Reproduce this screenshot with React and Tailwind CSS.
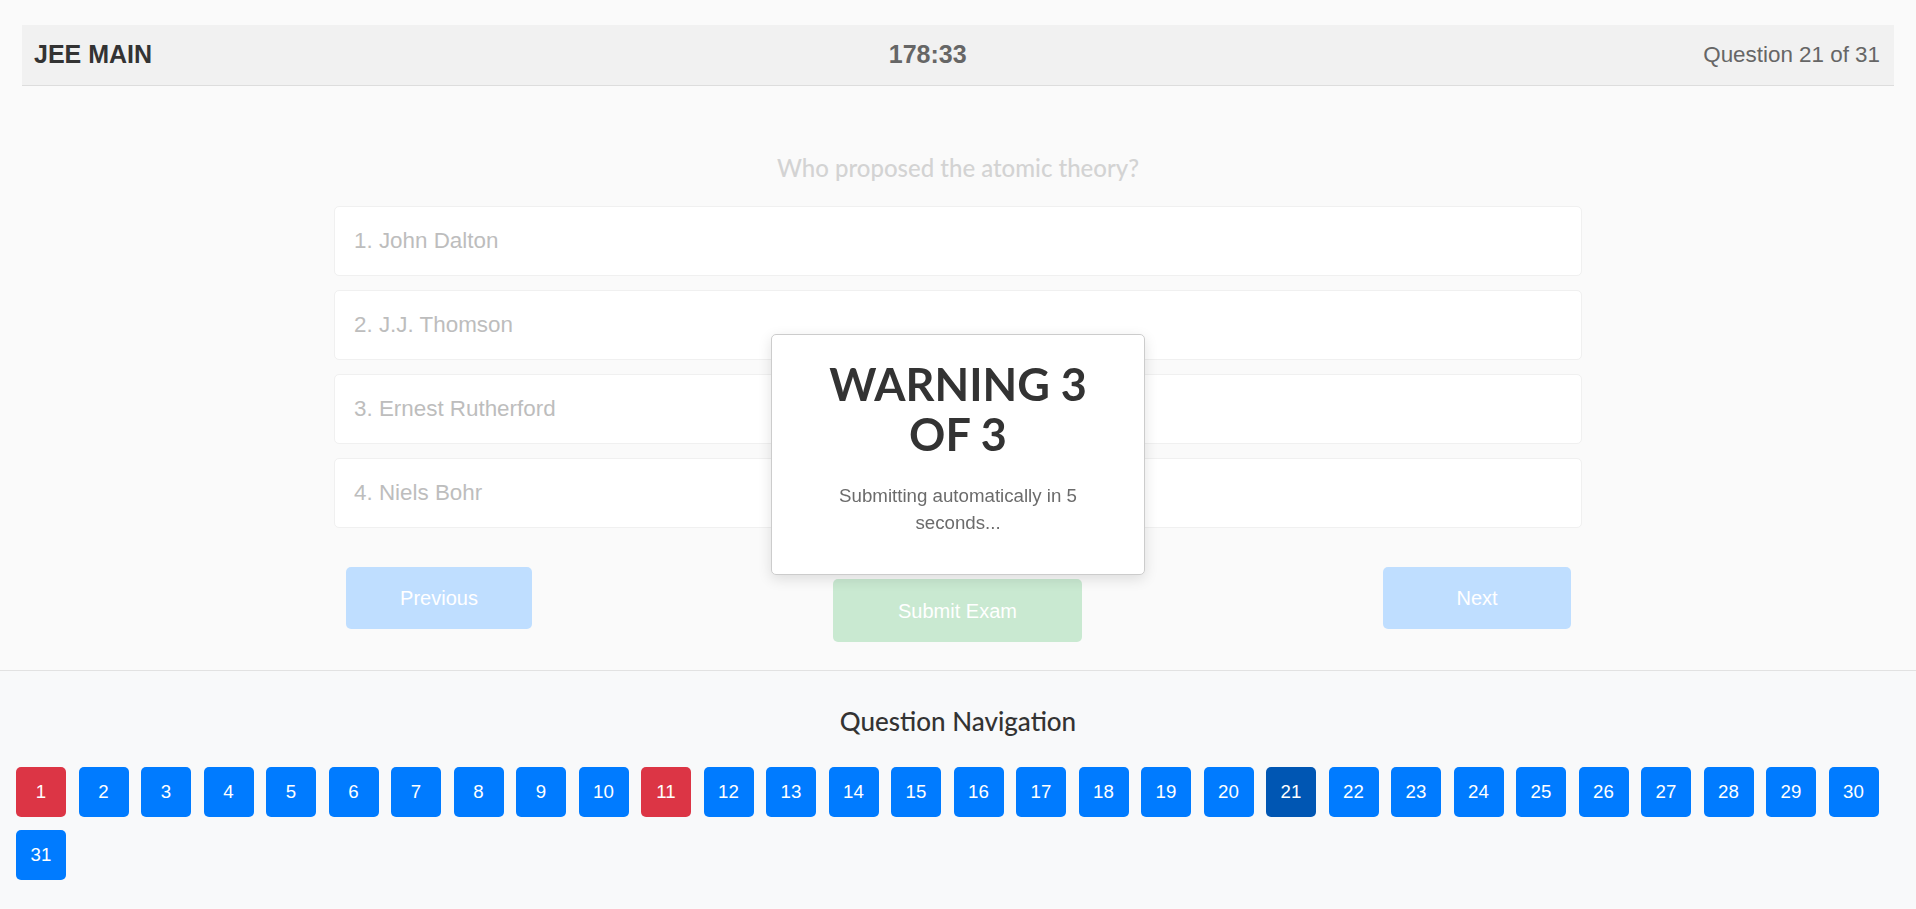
import React from "react";

const options = ["1. John Dalton", "2. J.J. Thomson", "3. Ernest Rutherford", "4. Niels Bohr"];

export default function App() {
  const nums = Array.from({ length: 31 }, (_, i) => i + 1);
  const red = [1, 11];
  return (
    <div className="min-h-screen bg-[#fafafa] font-['Liberation_Sans',Arial,sans-serif]">
      <div className="pt-[25px] px-[22px]">
        <div className="h-[61px] bg-[#f1f1f1] border-b border-[#dddddd] flex items-center justify-between pl-[12px] pr-[14px]">
          <div className="text-[25px] font-bold text-[#333333]">JEE MAIN</div>
          <div className="text-[25px] font-bold text-[#666666]">178:33</div>
          <div className="text-[22.4px] text-[#666666]">Question 21 of 31</div>
        </div>
      </div>

      <div className="pt-[67px] pb-[28px]">
        <h2 className="text-center font-['Lato',sans-serif] text-[24px] leading-[29px] font-medium text-[#d3d3d3] mb-[24px]">
          Who proposed the atomic theory?
        </h2>
        <div className="w-[1248px] mx-auto">
          <div className="flex flex-col gap-[14px]">
            {options.map((o) => (
              <div
                key={o}
                className="h-[70px] flex items-center px-[19px] bg-white border border-[#f0f0f0] rounded-[5px] text-[22.4px] text-[#bdbdbd]"
              >
                {o}
              </div>
            ))}
          </div>
          <div className="flex justify-between items-start mt-[39px] pl-[12px] pr-[11px]">
            <button className="w-[186px] h-[62px] rounded-[5px] bg-[#bfdeff] text-white text-[20px]">Previous</button>
            <button className="mt-[12px] w-[249px] h-[63px] rounded-[5px] bg-[#c9e9d1] text-white text-[20px]">Submit Exam</button>
            <button className="w-[188px] h-[62px] rounded-[5px] bg-[#bfdeff] text-white text-[20px]">Next</button>
          </div>
        </div>
      </div>

      <div className="border-t border-[#e2e2e2] bg-[#f8f9fa] pt-[36px] pb-[28px]">
        <h3 className="text-center font-['Lato',sans-serif] text-[26px] leading-[29px] font-medium text-[#333333] mb-[31px]">
          Question Navigation
        </h3>
        <div className="flex flex-wrap gap-x-[12.5px] gap-y-[13px] px-[16px]">
          {nums.map((n) => (
            <button
              key={n}
              className={
                "w-[50px] h-[50px] rounded-[5px] text-white text-[18.67px] flex items-center justify-center " +
                (n === 21 ? "bg-[#0056b3]" : red.includes(n) ? "bg-[#dc3545]" : "bg-[#007bff]")
              }
            >
              {n}
            </button>
          ))}
        </div>
      </div>

      <div className="fixed inset-0 flex items-center justify-center pointer-events-none">
        <div className="w-[374px] bg-white border border-[#cccccc] rounded-[5px] shadow-[0_4px_14px_rgba(0,0,0,0.12)] px-[40px] pt-[24px] pb-[37px] text-center">
          <h1 className="font-['Lato',sans-serif] font-bold text-[45px] leading-[50px] text-[#333333] mb-[24px]">
            WARNING 3 OF 3
          </h1>
          <p className="text-[18.7px] leading-[26.7px] text-[#6b6b6b]">Submitting automatically in 5 seconds...</p>
        </div>
      </div>
    </div>
  );
}
